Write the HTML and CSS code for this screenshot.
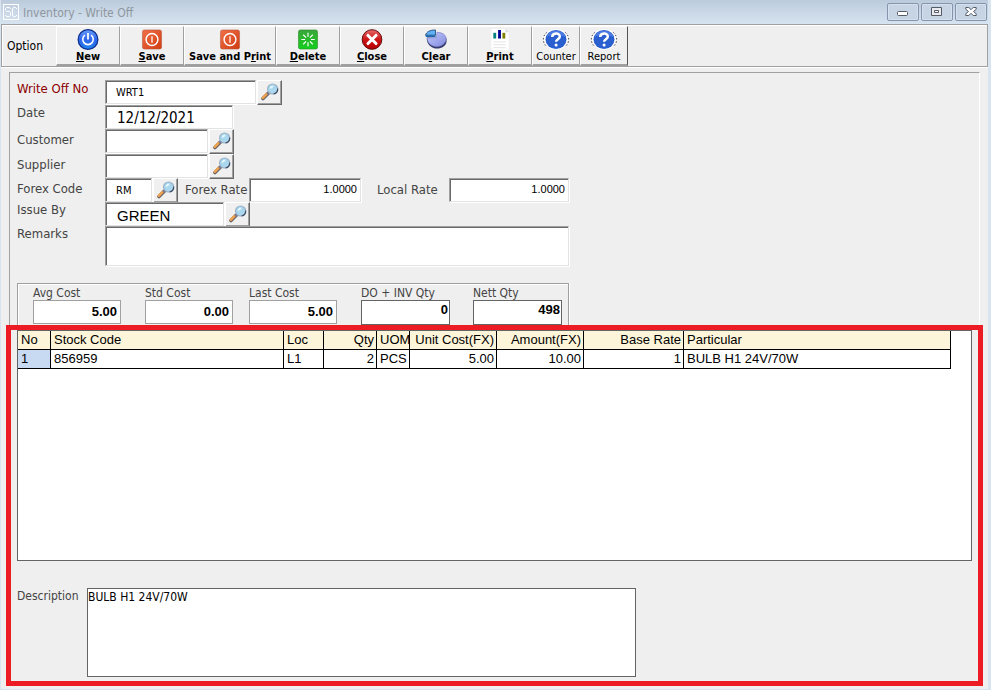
FILE: index.html
```html
<!DOCTYPE html>
<html lang="en">

<head>
    <meta charset="UTF-8">
    <meta name="viewport" content="width=device-width, initial-scale=1.0">
    <title>Inventory - Write Off</title>
    <link rel="stylesheet" href="styles.css">
</head>

<body>
    <!-- shared icons -->
    <svg class="defs" aria-hidden="true">
        <linearGradient id="g-blue" x1="0" y1="0" x2="0" y2="1">
            <stop offset="0" stop-color="#6d9cff" />
            <stop offset=".5" stop-color="#2f66ea" />
            <stop offset="1" stop-color="#2384f0" />
        </linearGradient>
        <linearGradient id="g-orange" x1="0" y1="0" x2="1" y2="1">
            <stop offset="0" stop-color="#f0704a" />
            <stop offset="1" stop-color="#d03c12" />
        </linearGradient>
        <linearGradient id="g-green" x1="0" y1="0" x2="0" y2="1">
            <stop offset="0" stop-color="#3aa53a" />
            <stop offset="1" stop-color="#12cf1c" />
        </linearGradient>
        <linearGradient id="g-red" x1="0" y1="0" x2="0" y2="1">
            <stop offset="0" stop-color="#e86a6a" />
            <stop offset=".5" stop-color="#cc1414" />
            <stop offset="1" stop-color="#b80000" />
        </linearGradient>
        <linearGradient id="g-pie" x1="0" y1="0" x2="1" y2="1">
            <stop offset="0" stop-color="#c4ccff" />
            <stop offset="1" stop-color="#8088dc" />
        </linearGradient>
        <symbol id="i-find" viewBox="0 0 18 18">
            <path d="M2 15.500 7 10.500" stroke="#6d6468" stroke-width="3.600" stroke-linecap="round" />
            <path d="M1.800 14.800 5.400 11.200" stroke="#f0a24c" stroke-width="2.400" stroke-linecap="round" />
            <path d="M6.400 10.800 8.400 9" stroke="#71788a" stroke-width="3" />
            <circle cx="11.600" cy="6" r="5" fill="#a9d8ee" stroke="#9db2c6" stroke-width="1.200" />
            <path d="M8.500 5.500a3.300 3.300 0 0 1 4-2.500c-1 2-2 2.600-4 2.500z" fill="#e8f8ff" />
            <path d="M12.500 11a5.200 5.200 0 0 0 4.200-5.500" stroke="#3e4c66" stroke-width="1.200" fill="none" />
        </symbol>
        <symbol id="i-save" viewBox="0 0 22 22">
            <rect x="1" y="1" width="20" height="20" rx="2" fill="url(#g-orange)" stroke="#b8583c" stroke-width=".6" />
            <circle cx="11" cy="11" r="6.200" fill="none" stroke="#fff" stroke-width="1.500" />
            <path d="M11 7.500v7" stroke="#ffd9cc" stroke-width="1.700" />
        </symbol>
        <symbol id="i-help" viewBox="0 0 28 22">
            <ellipse cx="14" cy="11" rx="13" ry="10.700" fill="#fff" />
            <path d="M4.500 3.500a13 10.700 0 0 0 0 15M23.500 3.500a13 10.700 0 0 1 0 15" fill="none" stroke="#223" stroke-dasharray="1.500 2" />
            <ellipse cx="14" cy="11" rx="11" ry="10" fill="#2a5fd0" />
            <path d="M4 8.500a10.500 9.500 0 0 1 20 0c-6-3-14-3-20 0z" fill="#5f8df0" opacity=".6" />
            <path d="M10 8.500c0-5 8-5 8-.6 0 2.800-3.900 2.800-3.900 5.500" fill="none" stroke="#fff" stroke-width="2.600" />
            <circle cx="14.100" cy="16.800" r="1.600" fill="#fff" />
        </symbol>
    </svg>

    <header class="titlebar">
        <svg class="logo" viewBox="0 0 16 16" fill="none" stroke="#fff">
            <rect x=".5" y=".5" width="15" height="15" />
            <path d="M7.500 5 6.500 3.500H3.500L2.500 4.500v2l1 1h3l1 1v3l-1 1H3.500L2.500 11M14 5l-1.500-1.500h-2L9.500 5v6l1 1.500h2L14 11" />
        </svg>
        <h1>Inventory - Write Off</h1>
        <div class="win-btns">
            <button type="button" aria-label="Minimize">
                <svg viewBox="0 0 12 10"><rect x=".5" y="4.500" width="10" height="4" rx="1" fill="#fff" stroke="#555a66" /></svg>
            </button>
            <button type="button" aria-label="Restore">
                <svg viewBox="0 0 12 10"><path d="M.5.5h10v8H.5z" fill="#e8eaee" stroke="#555a66" /><path d="M3.500 3.500h4v2h-4z" fill="#fff" stroke="#555a66" /></svg>
            </button>
            <button type="button" aria-label="Close window">
                <svg viewBox="0 0 12 10"><path d="M.8.5h3L6 2.700 8.200.5h3v1.800L8.500 4.500l2.700 2.200v1.800h-3L6 6.300 3.800 8.500h-3V6.700l2.700-2.200L.8 2.300z" fill="#fff" stroke="#555a66" /></svg>
            </button>
        </div>
    </header>

    <nav class="toolbar">
        <span class="option">Option</span>
        <button type="button" class="tool">
            <svg viewBox="0 0 24 24">
                <circle cx="12" cy="12" r="11.300" fill="url(#g-blue)" stroke="#0b2f8c" stroke-width="1.400" />
                <path d="M8.500 7a6 6 0 1 0 7 0" fill="none" stroke="#fff" stroke-width="1.800" />
                <path d="M12 4.500v7.500" stroke="#fff" stroke-width="2" />
            </svg>
            <span><u>N</u>ew</span>
        </button>
        <button type="button" class="tool">
            <svg><use href="#i-save" /></svg>
            <span><u>S</u>ave</span>
        </button>
        <button type="button" class="tool wide">
            <svg><use href="#i-save" /></svg>
            <span>Save and P<u>r</u>int</span>
        </button>
        <button type="button" class="tool">
            <svg viewBox="0 0 22 22">
                <rect x="1" y="1" width="20" height="20" rx="2" fill="url(#g-green)" stroke="#2a8a2a" stroke-width=".6" />
                <path d="M11 4v4M11 14v4M4 11h4M14 11h4M6 6l3 3M13 13l3 3M16 6l-3 3M9 13l-3 3" stroke="#fff" stroke-width="1.200" />
            </svg>
            <span><u>D</u>elete</span>
        </button>
        <button type="button" class="tool">
            <svg viewBox="0 0 22 22">
                <circle cx="11" cy="11" r="10.300" fill="url(#g-red)" stroke="#5c0808" />
                <path d="M6.800 6.800l8.400 8.400M15.200 6.800l-8.400 8.400" stroke="#fff" stroke-width="3.200" stroke-linecap="round" />
            </svg>
            <span><u>C</u>lose</span>
        </button>
        <button type="button" class="tool">
            <svg viewBox="0 0 24 22">
                <path d="M2.500 9v3c1 5 5.500 8.500 10.500 8.500S23 17 23 13v-3z" fill="#353a6c" />
                <path d="M13 3.500c6 0 9.700 3 9.700 7s-4.700 8-9.700 8S3 15.500 2.500 9.500l10-.5z" fill="url(#g-pie)" stroke="#6a72b8" stroke-width=".6" />
                <path d="M1 6.500C2 3 5.500 1 11.500 1v5.500z" fill="#5fb0f5" stroke="#173a66" stroke-width=".8" />
                <path d="M1 6.500h10.500v2H1.500z" fill="#1d65ad" />
            </svg>
            <span>C<u>l</u>ear</span>
        </button>
        <button type="button" class="tool">
            <svg viewBox="0 0 22 22">
                <path d="M2 0h15l3 3v19H2z" fill="#fff" />
                <path d="M17 0v3h3" fill="#ddd" stroke="#ccc" stroke-width=".5" />
                <path d="M5.500 4v6" stroke="#008080" stroke-width="3" />
                <path d="M10.500 1v9" stroke="#000090" stroke-width="3" />
                <path d="M15 4v6" stroke="#808000" stroke-width="3" />
                <path d="M4 13.500h13M4 16.500h13M4 19.500h13" stroke="#e4e4e4" />
            </svg>
            <span><u>P</u>rint</span>
        </button>
        <button type="button" class="tool small">
            <svg><use href="#i-help" /></svg>
            <span>Counter</span>
        </button>
        <button type="button" class="tool small">
            <svg><use href="#i-help" /></svg>
            <span>Report</span>
        </button>
    </nav>

    <form class="main">
        <section class="panel">
            <div class="row spaced">
                <label class="lbl required" for="no">Write Off No</label>
                <input class="w-no" id="no" type="text" value="WRT1">
                <button type="button" class="find" aria-label="Find write off"><svg><use href="#i-find" /></svg></button>
            </div>
            <div class="row">
                <label class="lbl high" for="date">Date</label>
                <input class="w-date big" id="date" type="text" value="12/12/2021">
            </div>
            <div class="row spaced">
                <label class="lbl low" for="customer">Customer</label>
                <input class="w-code" id="customer" type="text">
                <button type="button" class="find" aria-label="Find customer"><svg><use href="#i-find" /></svg></button>
            </div>
            <div class="row">
                <label class="lbl low" for="supplier">Supplier</label>
                <input class="w-code" id="supplier" type="text">
                <button type="button" class="find" aria-label="Find supplier"><svg><use href="#i-find" /></svg></button>
            </div>
            <div class="row">
                <label class="lbl low" for="forex">Forex Code</label>
                <input class="w-forex" id="forex" type="text" value="RM">
                <button type="button" class="find" aria-label="Find forex code"><svg><use href="#i-find" /></svg></button>
                <label class="lbl-rate" for="frate">Forex Rate</label>
                <input class="w-rate num" id="frate" type="text" value="1.0000">
                <label class="lbl-rate local" for="lrate">Local Rate</label>
                <input class="w-local num" id="lrate" type="text" value="1.0000">
            </div>
            <div class="row">
                <label class="lbl high" for="issue">Issue By</label>
                <input class="w-issue big arial" id="issue" type="text" value="GREEN">
                <button type="button" class="find" aria-label="Find issuer"><svg><use href="#i-find" /></svg></button>
            </div>
            <div class="row remarks">
                <label class="lbl high" for="remarks">Remarks</label>
                <textarea id="remarks"></textarea>
            </div>

            <div class="costs">
                <div class="cost">
                    <label for="avg">Avg Cost</label>
                    <input id="avg" type="text" value="5.00">
                </div>
                <div class="cost">
                    <label for="std">Std Cost</label>
                    <input id="std" type="text" value="0.00">
                </div>
                <div class="cost">
                    <label for="last">Last Cost</label>
                    <input id="last" type="text" value="5.00">
                </div>
                <div class="cost qty">
                    <label for="doinv">DO + INV Qty</label>
                    <input id="doinv" type="text" value="0">
                </div>
                <div class="cost qty">
                    <label for="nett">Nett Qty</label>
                    <input id="nett" type="text" value="498">
                </div>
            </div>
        </section>

        <section class="detail">
            <div class="grid">
                <table>
                    <colgroup>
                        <col class="c-no">
                        <col class="c-stock">
                        <col class="c-loc">
                        <col class="c-qty">
                        <col class="c-uom">
                        <col class="c-cost">
                        <col class="c-amount">
                        <col class="c-rate">
                        <col>
                    </colgroup>
                    <thead>
                        <tr>
                            <th>No</th>
                            <th>Stock Code</th>
                            <th>Loc</th>
                            <th class="r">Qty</th>
                            <th>UOM</th>
                            <th class="r">Unit Cost(FX)</th>
                            <th class="r">Amount(FX)</th>
                            <th class="r">Base Rate</th>
                            <th>Particular</th>
                        </tr>
                    </thead>
                    <tbody>
                        <tr>
                            <td class="sel">1</td>
                            <td>856959</td>
                            <td>L1</td>
                            <td class="r">2</td>
                            <td>PCS</td>
                            <td class="r">5.00</td>
                            <td class="r">10.00</td>
                            <td class="r">1</td>
                            <td>BULB H1 24V/70W</td>
                        </tr>
                    </tbody>
                </table>
            </div>
            <div class="desc">
                <label for="desc">Description</label>
                <textarea id="desc">BULB H1 24V/70W</textarea>
            </div>
        </section>
    </form>
</body>

</html>
```
FILE: styles.css
```css
* {
    margin: 0;
    padding: 0;
    box-sizing: border-box;
}

body {
    display: flex;
    flex-direction: column;
    min-height: 100vh;
    border: solid #d9e4f1;
    border-width: 0 3px 1px 1px;
    background: #efefef;
    font-family: "DejaVu Sans Condensed", "Noto Sans", sans-serif;
    font-size: 12px;
    color: #000;
}

input,
textarea,
button {
    font: inherit;
    color: inherit;
    border-radius: 0;
}

svg {
    display: block;
}

.defs {
    position: absolute;
    width: 0;
    height: 0;
}

/* title bar */
.titlebar {
    display: flex;
    align-items: center;
    height: 24px;
    margin-right: -3px;
    padding: 0 4px 0 2px;
    background: linear-gradient(#bccbdb, #d6e3f1);
}

.logo {
    width: 16px;
    height: 16px;
}

.titlebar h1 {
    flex: 1;
    margin-left: 4px;
    padding-top: 2px;
    font-size: 12px;
    font-weight: normal;
    color: #8f979f;
}

.win-btns {
    display: flex;
    gap: 2px;
}

.win-btns button {
    display: flex;
    align-items: center;
    justify-content: center;
    width: 32px;
    height: 18px;
    border: 1px solid #8593ad;
    border-radius: 2px;
    background: #c6d4e4;
    box-shadow: inset 0 0 0 1px #d6e1ee;
}

.win-btns svg {
    width: 12px;
    height: 10px;
}

/* toolbar */
.toolbar {
    display: flex;
    height: 43px;
    padding-top: 1px;
    border: 1px solid #a0a0a0;
    box-shadow: inset 1px 1px #fff, 0 1px #fff;
}

.option {
    width: 54px;
    padding-left: 5px;
    line-height: 40px;
}

.tool {
    display: flex;
    flex-direction: column;
    align-items: center;
    width: 64px;
    height: 40px;
    padding-top: 2px;
    border: solid;
    border-width: 1px 1px 2px 1px;
    border-color: #fff #a0a0a0 #a0a0a0 #fff;
    background: #f0f0f0;
    font-size: 11px;
    font-weight: bold;
    line-height: 14px;
    white-space: nowrap;
}

.tool svg {
    width: 24px;
    height: 22px;
}

.tool.wide {
    width: 92px;
}

.tool.small {
    width: 48px;
    font-weight: normal;
}

.tool.small svg {
    width: 28px;
}

.tool:last-child {
    border-right-color: #555;
}

/* form */
.main {
    display: flex;
    flex: 1;
    flex-direction: column;
    padding: 5px 5px 3px 5px;
}

.panel {
    margin: 0 3px;
    padding: 7px 7px 0 7px;
    border: solid;
    border-width: 1px 1px 0 1px;
    border-color: #a0a0a0 #fff #fff #a0a0a0;
    color: #444;
}

.row {
    display: flex;
    height: 24px;
    font-size: 13px;
}

.spaced {
    margin-bottom: 1px;
}

.lbl {
    width: 88px;
    line-height: 18px;
}

.high {
    line-height: 16px;
}

.low {
    line-height: 21px;
}

.required {
    color: #8b0000;
}

.row input,
.row textarea {
    border: 1px solid;
    border-color: #a0a0a0 #e3e3e3 #e3e3e3 #a0a0a0;
    background: #fff;
    color: #000;
    box-shadow: inset 1px 1px #696969, 1px 1px #fff;
}

.row input {
    height: 24px;
    padding: 0 10px;
    font-size: 11px;
}

.row .big {
    padding: 2px 11px 0;
    font-size: 15px;
}

.row .arial {
    font-family: "Liberation Sans", sans-serif;
}

.row .num {
    padding: 0 3px 2px 0;
    font-family: "Liberation Sans", sans-serif;
    font-size: 11px;
    text-align: right;
}

.w-no {
    width: 151px;
}

.w-date {
    width: 128px;
}

.w-code {
    width: 103px;
}

.w-forex {
    width: 47px;
}

.w-rate {
    width: 112px;
}

.w-local {
    width: 120px;
}

.w-issue {
    width: 119px;
}

.find {
    width: 25px;
    height: 25px;
    margin-left: 1px;
    padding: 0 0 2px 3px;
    border: 1px solid;
    border-color: #fff #696969 #696969 #fff;
    background: #f0f0f0;
    box-shadow: inset -1px -1px #a0a0a0;
}

.find svg {
    width: 18px;
    height: 18px;
}

.lbl-rate {
    width: 71px;
    padding-left: 7px;
    line-height: 24px;
    white-space: nowrap;
}

.local {
    width: 88px;
    padding-left: 16px;
}

.remarks {
    height: 40px;
}

.remarks textarea {
    width: 464px;
    resize: none;
}

/* cost boxes */
.costs {
    display: flex;
    gap: 24px;
    width: 552px;
    height: 42px;
    margin-top: 17px;
    padding-left: 15px;
    border: solid #a0a0a0;
    border-width: 1px 1px 0 1px;
    box-shadow: inset 1px 1px #fff, 1px 0 #fff;
}

.cost {
    width: 88px;
    white-space: nowrap;
}

.cost:nth-child(2) {
    margin-right: -8px;
}

.cost label {
    display: block;
    height: 16px;
    line-height: 18px;
}

.cost input {
    width: 88px;
    height: 24px;
    padding: 0 3px 2px 0;
    border: 1px solid #a0a0a0;
    background: #fff;
    color: #000;
    font-family: "Liberation Sans", sans-serif;
    font-size: 13px;
    font-weight: bold;
    text-align: right;
}

.qty input {
    width: 89px;
    height: 25px;
    padding: 0 1px 7px 0;
    border-color: #646464;
}

/* item grid */
.detail {
    display: flex;
    flex: 1;
    flex-direction: column;
    border: 5px solid #ed1c24;
}

.grid {
    flex: 1;
    margin: 0 6px;
    border: 1px solid #646464;
    background: #fff;
}

table {
    width: calc(100% - 20px);
    table-layout: fixed;
    border-collapse: separate;
    border-spacing: 0;
    font-family: "Liberation Sans", sans-serif;
    font-size: 13px;
}

th,
td {
    height: 19px;
    padding: 0 2px 0 3px;
    border: solid #000;
    border-width: 0 1px 1px 0;
    font-weight: normal;
    line-height: 18px;
    text-align: left;
    white-space: nowrap;
}

/* unit of measure fills its narrow column */
th:nth-child(5),
td:nth-child(5) {
    padding-right: 0;
}

th {
    background: #fdf5d9;
}

th.r,
td.r {
    text-align: right;
}

.sel {
    background: #c8d9f2;
}

.c-no {
    width: 33px;
}

.c-stock {
    width: 233px;
}

.c-loc {
    width: 40px;
}

.c-qty {
    width: 53px;
}

.c-uom {
    width: 33px;
}

.c-cost,
.c-amount {
    width: 87px;
}

.c-rate {
    width: 100px;
}

.desc {
    display: flex;
    margin: 27px 6px 4px;
    color: #444;
}

.desc label {
    width: 70px;
    line-height: 16px;
}

.desc textarea {
    width: 549px;
    height: 89px;
    border: 1px solid #646464;
    background: #fff;
    color: #000;
    line-height: 16px;
    resize: none;
}
```
